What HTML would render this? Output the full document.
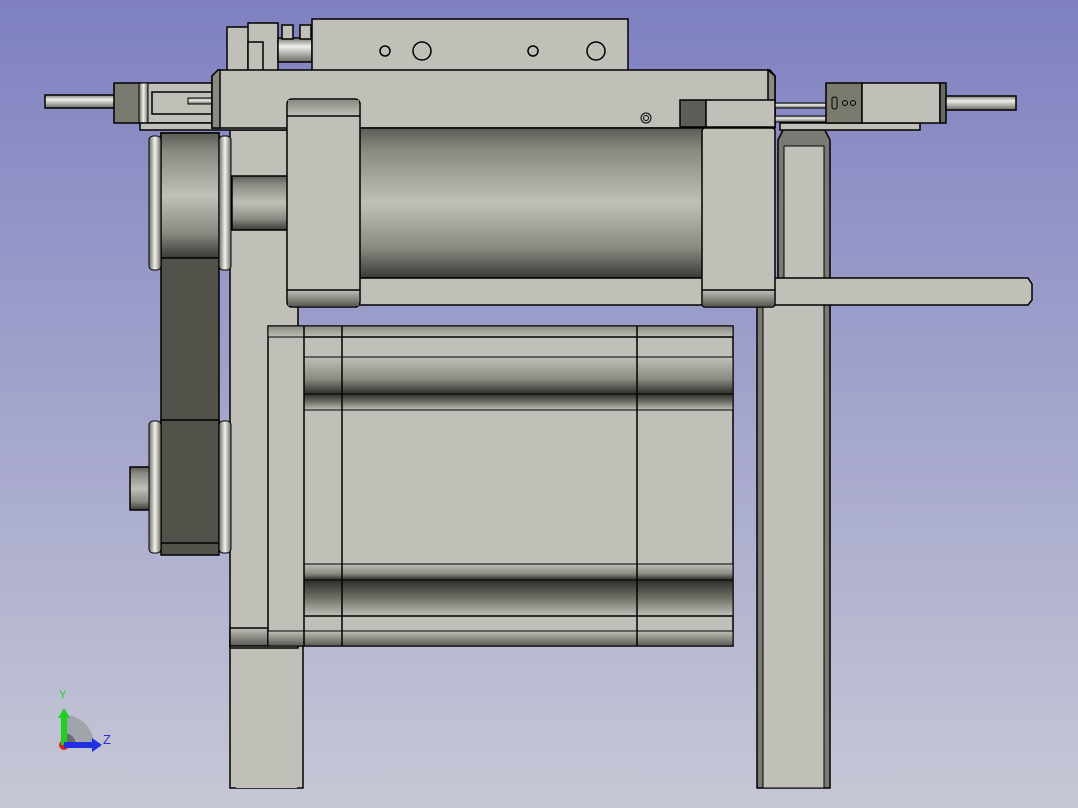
<!DOCTYPE html>
<html><head><meta charset="utf-8"><style>
html,body{margin:0;padding:0;width:1078px;height:808px;overflow:hidden}
svg{display:block}
</style></head><body>
<svg width="1078" height="808" viewBox="0 0 1078 808" xmlns="http://www.w3.org/2000/svg">
<defs>
<linearGradient id="bg" x1="0" y1="0" x2="0" y2="1"><stop offset="0" stop-color="#7f80c1"/><stop offset="1" stop-color="#c6c8d6"/></linearGradient>
<linearGradient id="cyl" x1="0" y1="0" x2="0" y2="1"><stop offset="0" stop-color="#5c5c56"/><stop offset="0.15" stop-color="#8a8a82"/><stop offset="0.5" stop-color="#c0c0b8"/><stop offset="0.8" stop-color="#8a8a82"/><stop offset="1" stop-color="#3a3a36"/></linearGradient>
<linearGradient id="rod" x1="0" y1="0" x2="0" y2="1"><stop offset="0" stop-color="#7a7a74"/><stop offset="0.35" stop-color="#f0f0ea"/><stop offset="1" stop-color="#6a6a64"/></linearGradient>
<linearGradient id="rib" x1="0" y1="0" x2="0" y2="1"><stop offset="0" stop-color="#c0c0b8"/><stop offset="0.6" stop-color="#8a8a82"/><stop offset="1" stop-color="#2e2e2a"/></linearGradient>
<linearGradient id="ribd" x1="0" y1="0" x2="0" y2="1"><stop offset="0" stop-color="#2e2e2a"/><stop offset="0.5" stop-color="#707068"/><stop offset="1" stop-color="#c0c0b8"/></linearGradient>
<linearGradient id="capt" x1="0" y1="0" x2="0" y2="1"><stop offset="0" stop-color="#8a8a82"/><stop offset="1" stop-color="#c0c0b8"/></linearGradient>
<linearGradient id="capb" x1="0" y1="0" x2="0" y2="1"><stop offset="0" stop-color="#c0c0b8"/><stop offset="1" stop-color="#5a5a54"/></linearGradient>
<linearGradient id="fl" x1="0" y1="0" x2="1" y2="0"><stop offset="0" stop-color="#6a6a64"/><stop offset="0.5" stop-color="#f4f4ee"/><stop offset="1" stop-color="#6a6a64"/></linearGradient>
</defs>
<rect width="1078" height="808" fill="url(#bg)"/>
<g stroke="#000" stroke-width="1.5" fill="#c0c0b8">
<!-- legs -->
<rect x="230" y="640" width="73" height="148"/>
<rect x="236" y="640" width="61" height="148" stroke="none"/>
<rect x="757" y="300" width="73" height="488" fill="#7a7a74"/>
<rect x="763" y="300" width="61" height="488" fill="#c0c0b8" stroke-width="1"/>
<path d="M778 140 L784 128 L824 128 L830 140 L830 300 L778 300 Z" fill="#7a7a74"/>
<rect x="784" y="146" width="40" height="154" stroke-width="1"/>
<rect x="780" y="123" width="140" height="7"/>
<!-- vertical plate -->
<rect x="230" y="130" width="68" height="518"/>
<rect x="230" y="628" width="38" height="18" fill="url(#capb)"/>
<!-- top block -->
<rect x="227" y="27" width="25" height="45"/>
<rect x="248" y="23" width="30" height="49"/>
<rect x="248" y="42" width="15" height="30"/>
<rect x="278" y="38" width="34" height="24" fill="url(#rod)"/>
<rect x="282" y="25" width="11" height="14"/>
<rect x="300" y="25" width="11" height="14"/>
<rect x="312" y="19" width="316" height="53"/>
<circle cx="385" cy="51" r="5" fill="none"/><circle cx="422" cy="51" r="9" fill="none"/>
<circle cx="533" cy="51" r="5" fill="none"/><circle cx="596" cy="51" r="9" fill="none"/>
<!-- left rod/bracket -->
<rect x="45" y="95" width="70" height="13" fill="url(#rod)"/>
<rect x="140" y="83" width="75" height="40"/>
<rect x="152" y="92" width="60" height="22"/>
<rect x="188" y="98" width="24" height="6" fill="url(#rod)" stroke-width="1"/>
<rect x="114" y="83" width="26" height="40" fill="#7a7a70"/>
<rect x="139" y="83" width="9" height="40" fill="url(#fl)" stroke-width="1"/>
<rect x="140" y="123" width="150" height="7"/>
<!-- main bar -->
<path d="M212 76 L218 70 L770 70 L775 76 L775 128 L212 128 Z"/>
<path d="M212 76 L218 70 L220 70 L220 128 L212 128Z" fill="#8a8a82"/>
<path d="M768 70 L775 76 L775 128 L768 128Z" fill="#8a8a82"/>
<circle cx="646" cy="118" r="5" fill="none" stroke-width="1"/><circle cx="646" cy="118" r="2.5" fill="none" stroke-width="1"/>
<!-- right attachments -->
<rect x="775" y="103" width="52" height="5" fill="url(#rod)" stroke-width="1"/>
<rect x="775" y="116" width="52" height="6" fill="url(#rod)" stroke-width="1"/>
<rect x="826" y="83" width="36" height="40" fill="#7a7a6e"/>
<rect x="832" y="97" width="5" height="12" rx="2" fill="none" stroke-width="1"/>
<circle cx="845" cy="103" r="2.5" fill="none" stroke-width="1"/><circle cx="853" cy="103" r="2.5" fill="none" stroke-width="1"/>
<rect x="862" y="83" width="78" height="40"/>
<rect x="940" y="83" width="6" height="40" fill="#6a6a66"/>
<rect x="946" y="96" width="70" height="14" fill="url(#rod)"/>
<rect x="680" y="100" width="26" height="27" fill="#5e5e58"/>
<rect x="706" y="100" width="69" height="27"/>
<!-- shaft -->
<rect x="232" y="176" width="56" height="54" fill="url(#cyl)"/>
<!-- cylinder -->
<rect x="358" y="128" width="346" height="150" fill="url(#cyl)"/>
<rect x="358" y="278" width="346" height="27"/>
<path d="M772 278 L1028 278 L1032 284 L1032 300 L1028 305 L772 305 Z"/>
<rect x="287" y="99" width="73" height="208" rx="5"/>
<rect x="288" y="100" width="71" height="16" fill="url(#capt)" stroke="none"/>
<line x1="287" y1="116" x2="360" y2="116"/>
<rect x="288" y="290" width="71" height="16" fill="url(#capb)" stroke="none"/>
<line x1="287" y1="290" x2="360" y2="290"/>
<rect x="702" y="128" width="73" height="179" rx="3"/>
<rect x="703" y="290" width="71" height="16" fill="url(#capb)" stroke="none"/>
<line x1="702" y1="290" x2="775" y2="290"/>
<!-- motor -->
<rect x="268" y="326" width="465" height="320"/>
<rect x="268" y="326" width="465" height="11" fill="url(#capt)" stroke-width="1"/>
<rect x="268" y="631" width="465" height="15" fill="url(#capb)" stroke-width="1"/>
<rect x="304" y="357" width="429" height="37" fill="url(#rib)" stroke-width="1"/>
<rect x="304" y="394" width="429" height="16" fill="url(#ribd)" stroke-width="1"/>
<rect x="304" y="564" width="429" height="16" fill="url(#rib)" stroke-width="1"/>
<rect x="304" y="580" width="429" height="36" fill="url(#ribd)" stroke-width="1"/>
<line x1="304" y1="337" x2="733" y2="337"/><line x1="304" y1="616" x2="733" y2="616"/>
<line x1="304" y1="326" x2="304" y2="646"/><line x1="342" y1="326" x2="342" y2="646"/><line x1="637" y1="326" x2="637" y2="646"/>
<!-- pulleys & belt -->
<rect x="161" y="133" width="58" height="422" fill="#52524a"/>
<rect x="161" y="133" width="58" height="125" fill="url(#cyl)"/>
<rect x="161" y="420" width="58" height="123" fill="#52524a"/>
<rect x="149" y="136" width="12" height="134" rx="4" fill="url(#fl)" stroke-width="1"/>
<rect x="219" y="136" width="12" height="134" rx="4" fill="url(#fl)" stroke-width="1"/>
<rect x="130" y="467" width="28" height="43" fill="url(#cyl)"/>
<rect x="149" y="421" width="12" height="132" rx="4" fill="url(#fl)" stroke-width="1"/>
<rect x="219" y="421" width="12" height="132" rx="4" fill="url(#fl)" stroke-width="1"/>
</g>
<!-- axis icon -->
<g>
<path d="M64 745 L64 715 A30 30 0 0 1 94 745 Z" fill="#9a9ca0" opacity="0.8"/>
<path d="M64 745 L64 733 A12 12 0 0 1 76 745 Z" fill="#6a6c70"/>
<circle cx="64" cy="745" r="5" fill="#e02020"/>
<rect x="61" y="716" width="6" height="29" fill="#20d020"/>
<path d="M58 718 L64 708 L70 718 Z" fill="#20d020"/>
<rect x="64" y="742" width="30" height="6" fill="#2030e0"/>
<path d="M92 738 L102 745 L92 752 Z" fill="#2030e0"/>
<text x="59" y="698" font-family="Liberation Sans,sans-serif" font-size="11" fill="#20d020">Y</text>
<text x="103" y="744" font-family="Liberation Sans,sans-serif" font-size="13" fill="#2030e0">Z</text>
</g>
</svg>
</body></html>
